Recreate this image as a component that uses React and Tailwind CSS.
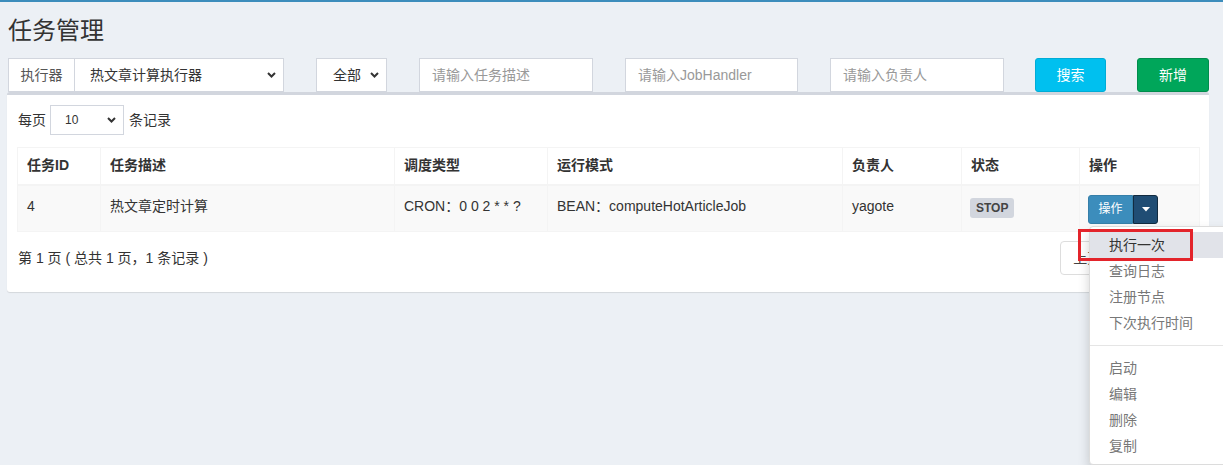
import { useState } from 'react';

/* small bold chevron used by the fake selects */
function Chevron({ className }) {
    return (
        <svg className={className} width="9" height="6" viewBox="0 0 9 6" fill="none">
            <path d="M1 1l3.5 3.5L8 1" stroke="#333" strokeWidth="2" />
        </svg>
    );
}

function FakeSelect({ value, className, textClass }) {
    return (
        <div className={`flex items-center justify-between bg-white border border-[#d2d6de] ${className}`}>
            <span className={textClass}>{value}</span>
            <Chevron className="mr-[7px]" />
        </div>
    );
}

function TextInput({ placeholder, width }) {
    return (
        <div className={`h-[34px] bg-white border border-[#d2d6de] flex items-center pl-[12px] text-[14px] text-[#999] ${width}`}>
            {placeholder}
        </div>
    );
}

function FilterBar() {
    return (
        <div className="flex items-center gap-[32px] h-[34px] pl-[1px]">
            <div className="flex h-[34px] w-[276px]">
                <div className="w-[67px] flex items-center justify-center bg-white border border-[#d2d6de] text-[14px] text-[#555]">
                    执行器
                </div>
                <FakeSelect value="热文章计算执行器" className="flex-1 border-l-0 h-[34px]"
                            textClass="pl-[15px] text-[14px] text-[#333]" />
            </div>
            <FakeSelect value="全部" className="w-[71px] h-[34px]" textClass="pl-[16px] text-[14px] text-[#333]" />
            <TextInput placeholder="请输入任务描述" width="w-[174px]" />
            <TextInput placeholder="请输入JobHandler" width="w-[173px]" />
            <TextInput placeholder="请输入负责人" width="w-[174px]" />
            <button className="w-[71px] h-[34px] -ml-[1px] rounded-[3px] bg-[#00c0ef] border border-[#00acd6] text-white text-[14px]">
                搜索
            </button>
            <button className="w-[72px] h-[34px] -ml-[1px] rounded-[3px] bg-[#00a65a] border border-[#008d4c] text-white text-[14px]">
                新增
            </button>
        </div>
    );
}

const menuTop = ["执行一次", "查询日志", "注册节点", "下次执行时间"];
const menuBottom = ["启动", "编辑", "删除", "复制"];

function ActionMenu() {
    const [hover] = useState(0);
    return (
        <div className="absolute left-[1px] top-[31px] w-[160px] bg-white border border-[#dcdcdc] rounded-[4px] shadow-[0_6px_12px_rgba(0,0,0,0.175)] py-[5px] z-10">
            <div className="absolute left-[-12px] top-[2px] w-[115px] h-[32px] border-[3px] border-[#e3242b]" />
            {menuTop.map((item, i) => (
                <div key={item}
                     className={`h-[26px] leading-[26px] pl-[19px] text-[14px] ${i === hover ? 'bg-[#e1e3e9] text-[#333]' : 'text-[#777]'}`}>
                    {item}
                </div>
            ))}
            <div className="h-px bg-[#e5e5e5] my-[9px]" />
            {menuBottom.map((item) => (
                <div key={item} className="h-[26px] leading-[26px] pl-[19px] text-[14px] text-[#777]">
                    {item}
                </div>
            ))}
        </div>
    );
}

const columns = [
    { title: "任务ID", w: "w-[83px]" },
    { title: "任务描述", w: "w-[294px]" },
    { title: "调度类型", w: "w-[153px]" },
    { title: "运行模式", w: "w-[295px]" },
    { title: "负责人", w: "w-[119px]" },
    { title: "状态", w: "w-[118px]" },
    { title: "操作", w: "w-[120px]" },
];

function JobTable() {
    return (
        <table className="w-[1182px] table-fixed border-collapse border border-[#f4f4f4] text-[14px] text-[#333]">
            <thead>
                <tr className="bg-white">
                    {columns.map((c) => (
                        <th key={c.title}
                            className={`${c.w} text-left font-bold px-[9px] h-[37px] border border-[#f4f4f4] border-b-2`}>
                            {c.title}
                        </th>
                    ))}
                </tr>
            </thead>
            <tbody>
                <tr className="bg-[#f9f9f9] align-top">
                    <td className="px-[9px] pt-[10px] h-[47px] border border-[#f4f4f4]">4</td>
                    <td className="px-[9px] pt-[10px] border border-[#f4f4f4]">热文章定时计算</td>
                    <td className="px-[9px] pt-[10px] border border-[#f4f4f4]">CRON：0 0 2 * * ?</td>
                    <td className="px-[9px] pt-[10px] border border-[#f4f4f4]">BEAN：computeHotArticleJob</td>
                    <td className="px-[9px] pt-[10px] border border-[#f4f4f4]">yagote</td>
                    <td className="px-[8px] pt-[11px] border border-[#f4f4f4]">
                        <span className="inline-block bg-[#d2d6de] text-[#444] text-[12px] font-bold leading-[20px] px-[6px] rounded-[3px]">
                            STOP
                        </span>
                    </td>
                    <td className="px-[8px] pt-[9px] border border-[#f4f4f4]">
                        <div className="relative flex h-[29px] w-[70px]">
                            <div className="w-[45px] flex items-center justify-center bg-[#3c8dbc] border border-[#367fa9] rounded-l-[3px] text-white text-[12px]">
                                操作
                            </div>
                            <div className="w-[25px] flex items-center justify-center bg-[#204d74] border border-[#122b40] rounded-r-[3px]">
                                <svg width="8" height="5" viewBox="0 0 8 5"><path d="M0 0h8L4 4.5z" fill="#fff" /></svg>
                            </div>
                            <ActionMenu />
                        </div>
                    </td>
                </tr>
            </tbody>
        </table>
    );
}

function Pagination() {
    return (
        <div className="flex text-[14px] text-[#444] mr-[-1px]">
            <div className="h-[34px] px-[12px] flex items-center border border-[#ddd] rounded-l-[4px] bg-white">上页</div>
            <div className="h-[34px] px-[12px] flex items-center border border-[#ddd] border-l-0 bg-[#3c8dbc] text-white">1</div>
            <div className="h-[34px] px-[12px] flex items-center border border-[#ddd] border-l-0 rounded-r-[4px] bg-white">下页</div>
        </div>
    );
}

export default function App() {
    return (
        <div className="w-[1223px] h-[465px] overflow-hidden bg-[#ecf0f5] border-t-2 border-[#3c8dbc] px-[7px] font-['Liberation_Sans','Noto_Sans_CJK_SC',sans-serif] text-[#333]">
            <h1 className="pt-[14px] pl-[1px] text-[24px] leading-[30px] mb-[12px]">任务管理</h1>
            <FilterBar />
            <div className="w-[1202px] bg-white border-t-[3px] border-[#d2d6de] rounded-[3px] shadow-[0_1px_1px_rgba(0,0,0,0.1)] px-[10px] pt-[10px] pb-[17px]">
                <div className="flex items-center h-[30px] text-[14px] pl-[1px]">
                    <span>每页</span>
                    <FakeSelect value="10" className="w-[74px] h-[30px] ml-[4px] mr-[5px]" textClass="pl-[14px] text-[12px] text-[#333]" />
                    <span>条记录</span>
                </div>
                <div className="mt-[12px]">
                    <JobTable />
                </div>
                <div className="flex justify-between items-start mt-[9px]">
                    <div className="pt-[7px] pl-[1px] text-[14px]">第 1 页 ( 总共 1 页，1 条记录 )</div>
                    <Pagination />
                </div>
            </div>
        </div>
    );
}
